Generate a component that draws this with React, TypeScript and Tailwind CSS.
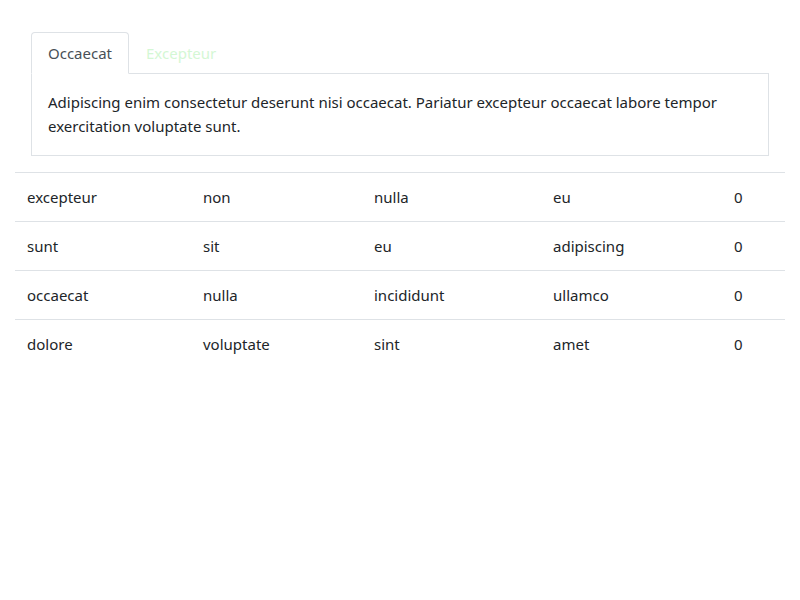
import React, { useState } from 'react';

const rows = [
  ['excepteur', 'non', 'nulla', 'eu', '0'],
  ['sunt', 'sit', 'eu', 'adipiscing', '0'],
  ['occaecat', 'nulla', 'incididunt', 'ullamco', '0'],
  ['dolore', 'voluptate', 'sint', 'amet', '0'],
];

const colWidths = ['w-[176px]', 'w-[171px]', 'w-[179px]', 'w-[181px]', ''];

export default function App() {
  const [tab, setTab] = useState(0);
  return (
    <div className="min-h-screen bg-white px-[15px] pt-4 text-[#212529] text-[15px] leading-6 font-['Noto_Sans',sans-serif]">
      <div className="p-4">
        <div className="flex border-b border-[#dee2e6]">
          <button
            onClick={() => setTab(0)}
            className={`-mb-px px-4 py-2 border rounded-t ${tab === 0 ? 'border-[#dee2e6] border-b-white bg-white text-[#495057]' : 'border-transparent text-[#d4f7d4]'}`}
          >
            Occaecat
          </button>
          <button
            onClick={() => setTab(1)}
            className={`-mb-px px-4 py-2 border rounded-t ${tab === 1 ? 'border-[#dee2e6] border-b-white bg-white text-[#495057]' : 'border-transparent text-[#d4f7d4]'}`}
          >
            Excepteur
          </button>
        </div>
        <div className="border border-t-0 border-[#dee2e6] p-4 pb-[17px]">
          {tab === 0
            ? 'Adipiscing enim consectetur deserunt nisi occaecat. Pariatur excepteur occaecat labore tempor exercitation voluptate sunt.'
            : 'Excepteur sint occaecat cupidatat non proident.'}
        </div>
      </div>
      <table className="w-full border-collapse">
        <tbody>
          {rows.map((r, i) => (
            <tr key={i} className="border-t border-[#dee2e6]">
              {r.map((c, j) => (
                <td key={j} className={`px-3 py-3 align-top ${colWidths[j]}`}>
                  {c}
                </td>
              ))}
            </tr>
          ))}
        </tbody>
      </table>
    </div>
  );
}
